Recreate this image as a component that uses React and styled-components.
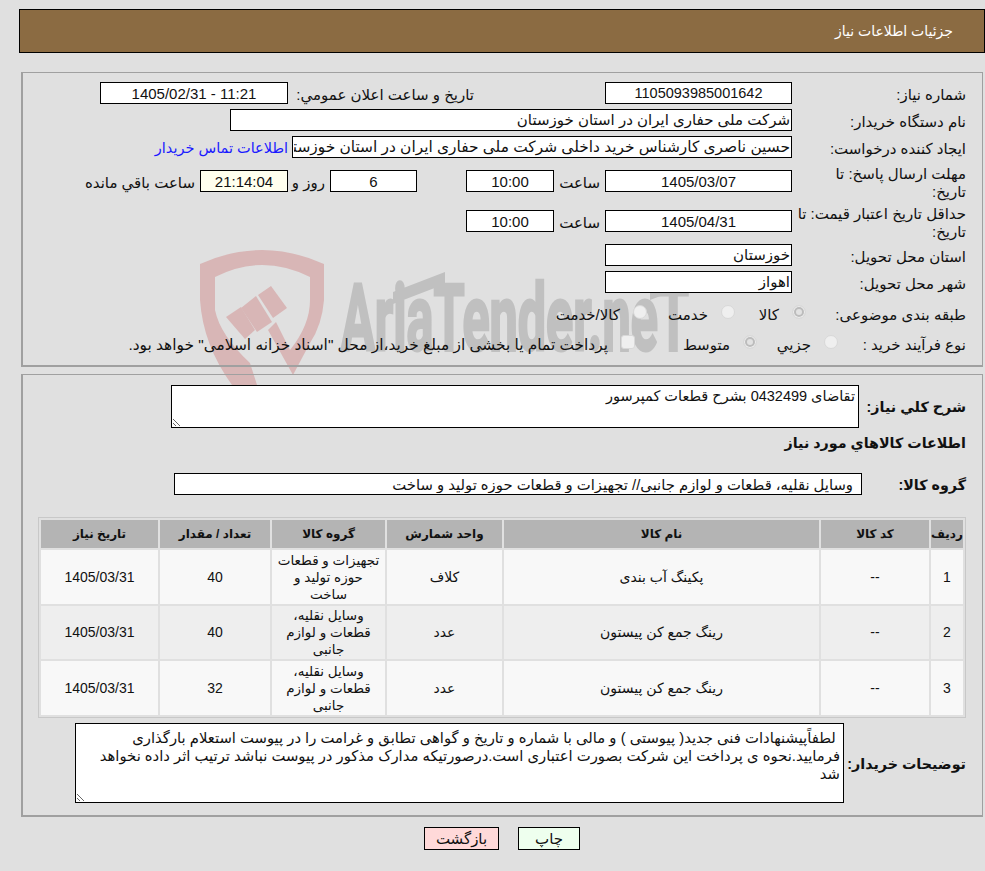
import React from 'react';
import styled, { createGlobalStyle } from 'styled-components';

const GlobalStyle = createGlobalStyle`
  html, body {
    margin: 0;
    padding: 0;
    background: #e0e0e0;
  }
  body {
    font-family: "Liberation Sans", "DejaVu Sans", sans-serif;
    font-size: 15px;
    color: #111;
  }
`;

const Page = styled.div`
  position: relative;
  width: 985px;
  height: 871px;
  overflow: hidden;
  direction: rtl;
`;

const Watermark = styled.svg`
  position: absolute;
  left: 0;
  top: 0;
  z-index: 0;
`;

const Content = styled.div`
  position: relative;
  z-index: 1;
  padding: 9px 0 0 0;
`;

const Header = styled.div`
  margin: 0 0 0 19px;
  height: 42px;
  background: #8b6b42;
  border: 1px solid #000;
  color: #fff;
  font-size: 14px;
  line-height: 42px;
  padding-right: 31px;
`;

const Panel = styled.div`
  margin: ${({ $top }) => $top}px 2px 0 21px;
  height: ${({ $height }) => $height}px;
  border: 1px solid #a0a0a0;
  border-width: 1px 1px 2px 2px;
  padding: ${({ $pad }) => $pad}px 16px 0 0;
`;

const Row = styled.div`
  display: flex;
  align-items: center;
  margin-top: ${({ $top = 0 }) => $top}px;
  min-height: 22px;
`;

const Label = styled.label`
  flex: none;
  width: ${({ $width = 174 }) => $width}px;
  padding-top: ${({ $drop = 2 }) => $drop}px;
  margin-bottom: ${({ $drop = 2 }) => -$drop}px;
  line-height: 18px;
  white-space: nowrap;
  font-weight: ${({ $bold }) => ($bold ? 700 : 400)};
  font-size: ${({ $bold }) => ($bold ? 14.3 : 15)}px;
`;

const Field = styled.input.attrs({ readOnly: true })`
  flex: none;
  box-sizing: border-box;
  width: ${({ $width }) => $width}px;
  height: 22px;
  margin: 0 ${({ $gap = 0 }) => $gap}px 0 0;
  padding: 0 ${({ $inset = 1 }) => $inset}px;
  border: 1px solid #000;
  border-radius: 0;
  outline: none;
  background: ${({ $bg = '#fff' }) => $bg};
  color: #111;
  font: inherit;
  font-size: ${({ $size = 15 }) => $size}px;
  direction: rtl;
  text-align: ${({ $center }) => ($center ? 'center' : 'right')};
`;

const Note = styled.span`
  flex: none;
  margin: 0 ${({ $side = 5 }) => $side}px -2px 0;
  padding-top: 2px;
  width: ${({ $width }) => ($width ? `${$width}px` : 'auto')};
`;

const ContactLink = styled.a`
  color: #1a1aff;
  margin: 0 4px -1px 0;
  padding-top: 1px;
  font-size: 14.5px;
  text-decoration: none;
  cursor: pointer;
`;

const Choice = styled.label`
  flex: none;
  display: flex;
  align-items: center;
  gap: 13px;
  font-size: ${({ $size = 15 }) => $size}px;
  width: ${({ $width }) => ($width ? `${$width}px` : 'auto')};
`;

const Radio = styled.span`
  flex: none;
  box-sizing: border-box;
  width: 14px;
  height: 14px;
  position: relative;
  top: -3px;
  border-radius: 50%;
  background: #efefef;
  border: 1px solid #d8d8d8;
  box-shadow: ${({ $checked }) => ($checked ? 'inset 0 0 0 1px #efefef, inset 0 0 0 3px #bcbcbc, inset 0 0 0 6px #e2e2e2' : 'none')};
`;

const Check = styled.span`
  flex: none;
  box-sizing: border-box;
  width: 14px;
  height: 14px;
  position: relative;
  top: -3px;
  border-radius: 3px;
  background: #efefef;
  border: 1px solid #d8d8d8;
`;

const Box = styled.textarea.attrs({ readOnly: true })`
  flex: none;
  box-sizing: border-box;
  width: ${({ $width }) => $width}px;
  height: ${({ $height }) => $height}px;
  margin: 0;
  padding: ${({ $pad = '1px 3px' }) => $pad};
  border: 1px solid #000;
  border-radius: 0;
  outline: none;
  background: #fff;
  color: #111;
  font: inherit;
  font-size: ${({ $size = 15 }) => $size}px;
  line-height: 18px;
  direction: rtl;
`;

const SectionTitle = styled.div`
  margin-top: 6px;
  font-weight: 700;
  font-size: 14.3px;
  line-height: 18px;
`;

const Table = styled.table`
  width: 928px;
  margin: 22px 0 0 0;
  table-layout: fixed;
  border-collapse: separate;
  border-spacing: 2px;
  border: 1px solid #c8c8c8;
  text-align: center;
`;

const Th = styled.th`
  height: 28px;
  padding: 0;
  background: #b4b4b4;
  font-size: 12px;
  font-weight: 700;
`;

const Td = styled.td`
  height: ${({ $height = 53 }) => $height}px;
  padding: 0 2px;
  box-sizing: border-box;
  background: ${({ $even }) => ($even ? '#eeeeee' : '#f8f8f8')};
  font-size: ${({ $size = 13.5 }) => $size}px;
  line-height: 17px;
`;

const Actions = styled.div`
  display: flex;
  justify-content: center;
  gap: 19px;
  margin: 10px 0 0 0;
  padding-left: 19px;
`;

const Button = styled.button`
  box-sizing: border-box;
  width: ${({ $width }) => $width}px;
  height: 23px;
  padding: 0;
  border: 1px solid #000;
  border-radius: 0;
  background: ${({ $bg }) => $bg};
  color: #111;
  font: inherit;
  font-size: 15px;
`;

const columns = [
  { title: 'رديف', width: 32 },
  { title: 'کد کالا', width: 108 },
  { title: 'نام کالا', width: 315 },
  { title: 'واحد شمارش', width: 115 },
  { title: 'گروه کالا', width: 113 },
  { title: 'تعداد / مقدار', width: 110 },
  { title: 'تاریخ نیاز', width: 117 },
];

const items = [
  {
    id: 1,
    name: 'پکینگ آب بندی',
    unit: 'کلاف',
    group: 'تجهیزات و قطعات حوزه تولید و ساخت',
    qty: 40,
    height: 54,
  },
  {
    id: 2,
    name: 'رینگ جمع کن پیستون',
    unit: 'عدد',
    group: 'وسایل نقلیه، قطعات و لوازم جانبی',
    qty: 40,
    height: 53,
  },
  {
    id: 3,
    name: 'رینگ جمع کن پیستون',
    unit: 'عدد',
    group: 'وسایل نقلیه، قطعات و لوازم جانبی',
    qty: 32,
    height: 54,
  },
];

const buyerNote =
  ' لطفاًپیشنهادات فنی جدید( پیوستی ) و مالی با شماره و تاریخ و گواهی تطابق و غرامت را در پیوست استعلام بارگذاری فرمایید.نحوه ی پرداخت این شرکت بصورت اعتباری است.درصورتیکه مدارک مذکور در پیوست نباشد ترتیب اثر داده نخواهد شد';

const Logo = () => (
  <Watermark width="985" height="871" viewBox="0 0 985 871">
    <path
      fill="#d8b6b6"
      d="M200 264 Q262 236 324 264 L324 300 Q322 325 310 343 L293 375 L268 330 L276 322 L290 350 Q310 325 310 300 L310 277 Q262 253 215 277 L215 310 Q220 335 250 363 L257 385 L232 385 Q203 345 200 300 Z"
    />
    <path fill="#d8b6b6" d="M226 317 L241 307 L255 330 L245 339 Z" />
    <path fill="#d8b6b6" d="M241 308 L256 296 L272 322 L257 332 Z" />
    <path fill="#d8b6b6" d="M258 295 L271 286 L287 308 L273 318 Z" />
    <text
      x="341"
      y="350"
      fill="#c0c0c0"
      stroke="#c0c0c0"
      strokeWidth="3"
      fontFamily="Roboto, sans-serif"
      fontWeight="700"
      fontSize="92"
      textLength="348"
      lengthAdjust="spacingAndGlyphs"
      direction="ltr"
    >
      AriaTender.neT
    </text>
    <polygon fill="#c0c0c0" points="393,292 445,272 445,284 393,304" />
    <polygon fill="#c0c0c0" points="650,290 687,273 684,287 650,300" />
  </Watermark>
);

export default function App() {
  return (
    <Page>
      <GlobalStyle />
      <Logo />
      <Content>
        <Header>جزئیات اطلاعات نیاز</Header>

        <Panel $top={19} $height={283} $pad={9}>
          <Row>
            <Label>شماره نیاز:</Label>
            <Field $width={187} $center $size={14.5} value="1105093985001642" />
            <Note $side={131} $width={186}>تاریخ و ساعت اعلان عمومي:</Note>
            <Field $width={188} $center value="11:21 - 1405/02/31" />
          </Row>
          <Row $top={5}>
            <Label>نام دستگاه خریدار:</Label>
            <Field $width={562} value="شرکت ملی حفاری ایران در استان خوزستان" />
          </Row>
          <Row $top={5}>
            <Label>ایجاد کننده درخواست:</Label>
            <Field
              $width={500}
              $size={15.4}
              value="حسین ناصری کارشناس خرید داخلی شرکت ملی حفاری ایران در استان خوزستان"
            />
            <ContactLink>اطلاعات تماس خریدار</ContactLink>
          </Row>
          <Row $top={5}>
            <Label>مهلت ارسال پاسخ: تا<br />تاریخ:</Label>
            <Field $width={187} $center value="1405/03/07" />
            <Note $width={46}>ساعت</Note>
            <Field $width={88} $center value="10:00" />
            <Field $gap={49} $width={87} $center value="6" />
            <Note $width={37}>روز و</Note>
            <Field $width={88} $center $bg="#ffffee" value="21:14:04" />
            <Note>ساعت باقي مانده</Note>
          </Row>
          <Row $top={4}>
            <Label>حداقل تاریخ اعتبار قیمت: تا<br />تاریخ:</Label>
            <Field $width={187} $center value="1405/04/31" />
            <Note $width={46}>ساعت</Note>
            <Field $width={88} $center value="10:00" />
          </Row>
          <Row $top={5}>
            <Label>استان محل تحویل:</Label>
            <Field $width={187} value="خوزستان" />
          </Row>
          <Row $top={5}>
            <Label>شهر محل تحویل:</Label>
            <Field $width={187} value="اهواز" />
          </Row>
          <Row $top={11}>
            <Label $width={160} $drop={0}>طبقه بندی موضوعی:</Label>
            <Choice $width={71}><Radio $checked />کالا</Choice>
            <Choice $width={88}><Radio />خدمت</Choice>
            <Choice><Radio />کالا/خدمت</Choice>
          </Row>
          <Row $top={8}>
            <Label $width={128} $drop={0}>نوع فرآیند خرید :</Label>
            <Choice $width={81}><Radio />جزيي</Choice>
            <Choice $width={122}><Radio $checked />متوسط</Choice>
            <Choice $size={15.4}><Check />پرداخت تمام یا بخشی از مبلغ خرید،از محل "اسناد خزانه اسلامی" خواهد بود.</Choice>
          </Row>
        </Panel>

        <Panel $top={7} $height={430} $pad={10}>
          <Row>
            <Label $width={107} $bold $drop={0}>شرح کلي نیاز:</Label>
            <Box $width={688} $height={43} $size={14.5} value="تقاضای 0432499 بشرح قطعات کمپرسور" />
          </Row>
          <SectionTitle>اطلاعات كالاهاي مورد نياز</SectionTitle>
          <Row $top={21}>
            <Label $width={104} $bold $drop={1}>گروه کالا:</Label>
            <Field
              $width={688}
              $inset={8}
              $size={14.8}
              value="وسایل نقلیه، قطعات و لوازم جانبی// تجهیزات و قطعات حوزه تولید و ساخت"
            />
          </Row>
          <Table>
            <colgroup>
              {columns.map((column) => (
                <col key={column.title} style={{ width: column.width }} />
              ))}
            </colgroup>
            <thead>
              <tr>
                {columns.map((column) => (
                  <Th key={column.title}>{column.title}</Th>
                ))}
              </tr>
            </thead>
            <tbody>
              {items.map((item) => {
                const even = item.id % 2 === 0;
                return (
                  <tr key={item.id}>
                    <Td $even={even} $size={14} $height={item.height}>{item.id}</Td>
                    <Td $even={even} $size={14}>--</Td>
                    <Td $even={even} $size={14}>{item.name}</Td>
                    <Td $even={even} $size={14}>{item.unit}</Td>
                    <Td $even={even}>{item.group}</Td>
                    <Td $even={even} $size={14}>{item.qty}</Td>
                    <Td $even={even} $size={14}>1405/03/31</Td>
                  </tr>
                );
              })}
            </tbody>
          </Table>
          <Row $top={5}>
            <Label $width={122} $bold $drop={1}>توضیحات خریدار:</Label>
            <Box $width={769} $height={80} $size={14.8} $pad="5px 3px 1px 15px" value={buyerNote} />
          </Row>
        </Panel>

        <Actions>
          <Button $width={62} $bg="#eeffee">چاپ</Button>
          <Button $width={75} $bg="#ffd9d9">بازگشت</Button>
        </Actions>
      </Content>
    </Page>
  );
}
